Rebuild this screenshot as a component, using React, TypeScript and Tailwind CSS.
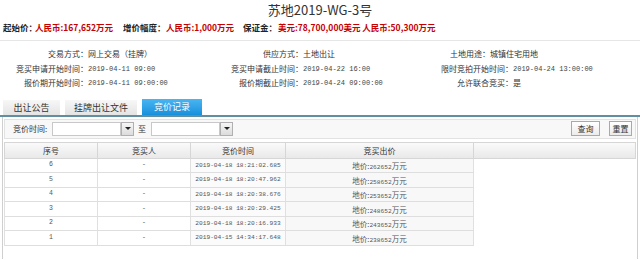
import React from "react";

const cjk = { fontFamily: '"Noto Sans CJK SC", "Noto Sans", sans-serif' };
const mono = { fontFamily: '"Liberation Mono", "Noto Sans CJK SC", monospace' };

const rows = [
  ["6", "2019-04-18 18:21:02.685", "262652"],
  ["5", "2019-04-18 18:20:47.962", "258652"],
  ["4", "2019-04-18 18:20:38.676", "253652"],
  ["3", "2019-04-18 18:20:29.425", "248652"],
  ["2", "2019-04-18 18:20:16.933", "243652"],
  ["1", "2019-04-15 14:34:17.648", "238652"],
];

function Label({ w, children }: { w: string; children: React.ReactNode }) {
  return <div className={`${w} shrink-0 text-right whitespace-nowrap text-[8px] text-[#333]`}>{children}</div>;
}

function Val({ w, children, m }: { w: string; children: React.ReactNode; m?: boolean }) {
  return (
    <div
      className={`${w} shrink-0 whitespace-nowrap ${m ? "text-[7px] text-[#444]" : "text-[8px] text-[#333]"}`}
      style={m ? mono : cjk}
    >
      {children}
    </div>
  );
}

function Drop() {
  return (
    <div className="flex items-center">
      <div className="w-[69px] h-[14px] bg-white border border-[#c8c8c8]" />
      <div className="w-[13px] h-[14px] border border-[#b0b0b0] bg-gradient-to-b from-[#f6f6f6] to-[#dcdcdc] flex items-center justify-center">
        <div className="w-0 h-0 border-l-[3px] border-r-[3px] border-t-[3px] border-l-transparent border-r-transparent border-t-[#222]" />
      </div>
    </div>
  );
}

export default function App() {
  return (
    <div className="w-[640px] h-[260px] bg-white overflow-hidden" style={cjk}>
      <div className="h-[20px] leading-[20px] text-center text-[13px] text-[#333]">苏地2019-WG-3号</div>
      <div className="h-[15px] leading-[15px] flex font-bold text-[8.5px] whitespace-nowrap pl-[3px]">
        <span className="w-[32px] text-[#222]">起始价：</span>
        <span className="w-[88px] text-[#c40000]">人民币:167,652万元</span>
        <span className="w-[43px] text-[#222]">增价幅度：</span>
        <span className="w-[77px] text-[#c40000]">人民币:1,000万元</span>
        <span className="w-[35px] text-[#222]">保证金：</span>
        <span className="text-[#c40000]">美元:78,700,000美元 人民币:50,300万元</span>
      </div>
      <div className="mt-[5px] h-px bg-[#e6e6e6]" />
      <div className="mt-[6px] flex flex-col">
        <div className="h-[14.5px] leading-[14.5px] flex">
          <Label w="w-[88px]">交易方式：</Label>
          <Val w="w-[100px]">网上交易（挂牌）</Val>
          <Label w="w-[115px]">供应方式：</Label>
          <Val w="w-[120px]">土地出让</Val>
          <Label w="w-[67px]">土地用途：</Label>
          <Val w="w-[100px]">城镇住宅用地</Val>
        </div>
        <div className="h-[14.5px] leading-[14.5px] flex">
          <Label w="w-[88px]">竞买申请开始时间：</Label>
          <Val w="w-[100px]" m>2019-04-11 09:00</Val>
          <Label w="w-[115px]">竞买申请截止时间：</Label>
          <Val w="w-[120px]" m>2019-04-22 16:00</Val>
          <Label w="w-[90px]">限时竞拍开始时间：</Label>
          <Val w="w-[100px]" m>2019-04-24 13:00:00</Val>
        </div>
        <div className="h-[14.5px] leading-[14.5px] flex">
          <Label w="w-[88px]">报价期开始时间：</Label>
          <Val w="w-[100px]" m>2019-04-11 09:00:00</Val>
          <Label w="w-[115px]">报价期截止时间：</Label>
          <Val w="w-[120px]" m>2019-04-24 09:00:00</Val>
          <Label w="w-[90px]">允许联合竞买：</Label>
          <Val w="w-[100px]">是</Val>
        </div>
      </div>
      <div className="mt-[8px] flex items-end h-[16px] pl-[3px] gap-[5px]">
        <div className="w-[57px] h-[15px] leading-[15px] text-center text-[9px] text-[#333] bg-gradient-to-b from-[#f7f7f7] to-[#e4e4e4]">出让公告</div>
        <div className="w-[72px] h-[15px] leading-[15px] text-center text-[9px] text-[#333] bg-gradient-to-b from-[#f7f7f7] to-[#e4e4e4]">挂牌出让文件</div>
        <div className="w-[60px] h-[16px] leading-[16px] text-center text-[9px] text-white bg-gradient-to-b from-[#48b6f2] to-[#1590dc]">竞价记录</div>
      </div>
      <div className="h-[2px] bg-[#5f8fa0]" />
      <div className="mx-[2px] h-[142px] border-l border-r border-[#cfcfcf] px-px pt-[2px]">
        <div className="h-[20px] flex items-center bg-[#f8f8f8] border border-[#e2e2e2] pl-[8px] pr-[3px]">
          <span className="text-[8px] text-[#333] w-[39px]">竞价时间:</span>
          <Drop />
          <span className="text-[8px] text-[#333] ml-[4px] mr-[5px]">至</span>
          <Drop />
          <div className="flex-1" />
          <div className="w-[29px] h-[15px] leading-[13px] text-center text-[8px] text-[#333] border border-[#a9a9a9] bg-gradient-to-b from-white to-[#ececec]">查询</div>
          <div className="w-[23px] h-[15px] leading-[13px] text-center text-[8px] text-[#333] border border-[#a9a9a9] bg-gradient-to-b from-white to-[#ececec] ml-[9px]">重置</div>
        </div>
        <div className="mt-[3px] flex h-[17px] border border-[#d6d6d6] bg-gradient-to-b from-[#fafafa] to-[#e9e9e9] text-[8px] text-[#333] leading-[15px]">
          <div className="w-[93px] text-center border-r border-[#d6d6d6]">序号</div>
          <div className="w-[93px] text-center border-r border-[#d6d6d6]">竞买人</div>
          <div className="w-[95px] text-center border-r border-[#d6d6d6]">竞价时间</div>
          <div className="w-[188px] text-center border-r border-[#d6d6d6]">竞买出价</div>
          <div className="flex-1" />
        </div>
        <div className="flex flex-col w-[470px] border-l border-[#e0e0e0]">
          {rows.map((r) => (
            <div key={r[0]} className="flex h-[14.5px] border-b border-[#dedede] text-[#555]">
              <div className="w-[93px] flex items-center justify-center border-r border-[#e0e0e0] text-[6.5px]" style={mono}>{r[0]}</div>
              <div className="w-[93px] flex items-center justify-center border-r border-[#e0e0e0] text-[6.5px]" style={mono}>-</div>
              <div className="w-[95px] flex items-center justify-center border-r border-[#e0e0e0] text-[6.2px] bg-[#fbfbfb] whitespace-nowrap" style={mono}>{r[1]}</div>
              <div className="w-[188px] flex items-center justify-center border-r border-[#e0e0e0] bg-[#f8f8f8] whitespace-nowrap">
                <span className="leading-[10px]">
                  <span className="text-[7.5px]">地价:</span>
                  <span className="text-[6.2px]" style={mono}>{r[2]}</span>
                  <span className="text-[7.5px]">万元</span>
                </span>
              </div>
            </div>
          ))}
        </div>
      </div>
    </div>
  );
}
